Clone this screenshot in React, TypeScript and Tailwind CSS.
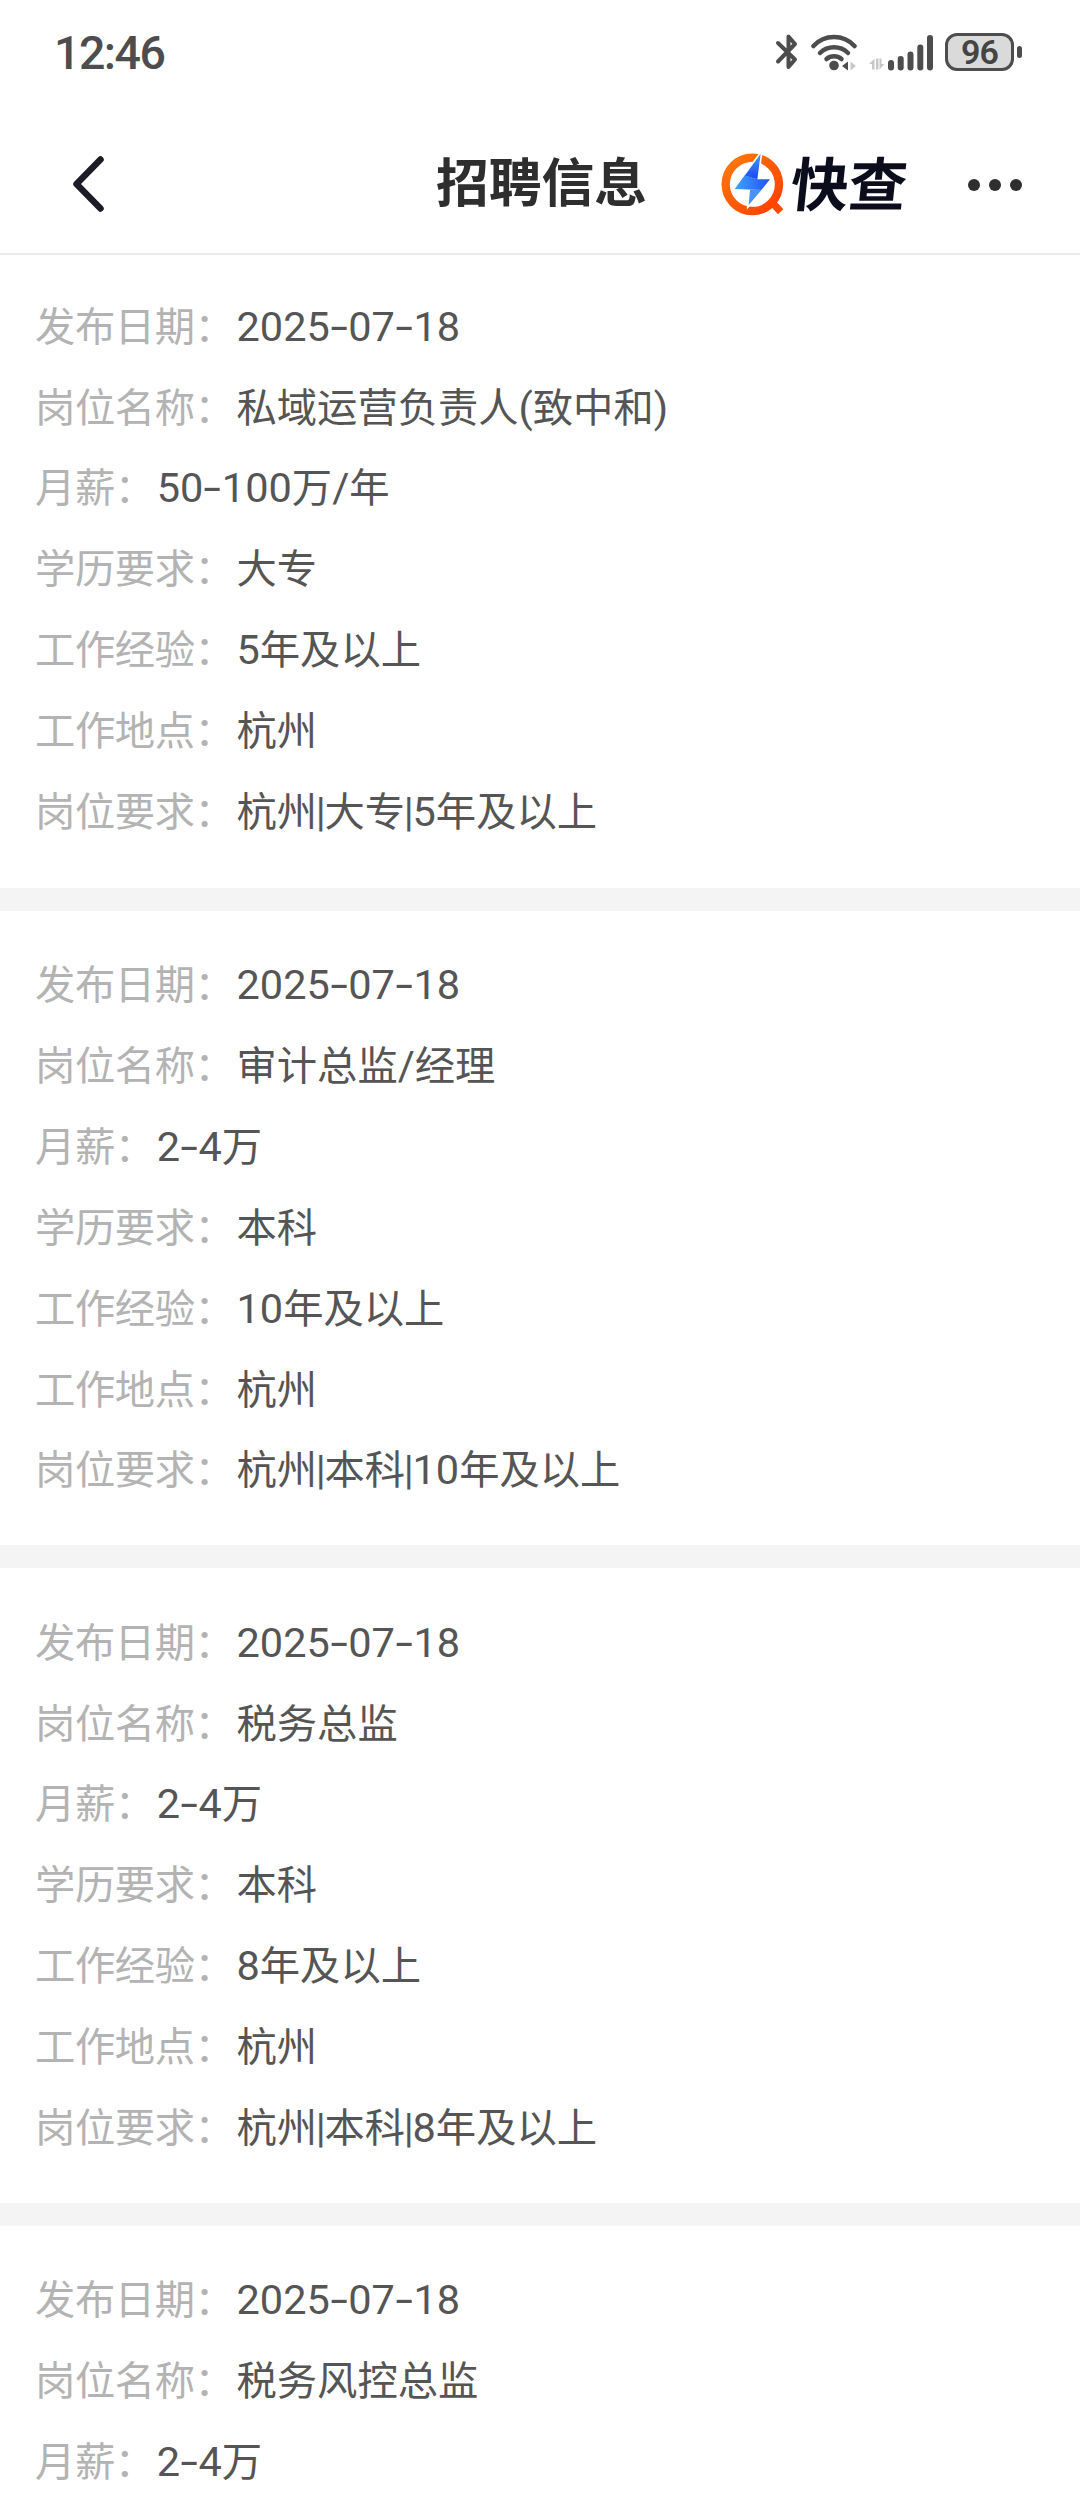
type Row = { label: string; value: string };

const jobs: Row[][] = [
  [
    { label: '发布日期', value: '2025-07-18' },
    { label: '岗位名称', value: '私域运营负责人(致中和)' },
    { label: '月薪', value: '50-100万/年' },
    { label: '学历要求', value: '大专' },
    { label: '工作经验', value: '5年及以上' },
    { label: '工作地点', value: '杭州' },
    { label: '岗位要求', value: '杭州|大专|5年及以上' }
  ],
  [
    { label: '发布日期', value: '2025-07-18' },
    { label: '岗位名称', value: '审计总监/经理' },
    { label: '月薪', value: '2-4万' },
    { label: '学历要求', value: '本科' },
    { label: '工作经验', value: '10年及以上' },
    { label: '工作地点', value: '杭州' },
    { label: '岗位要求', value: '杭州|本科|10年及以上' }
  ],
  [
    { label: '发布日期', value: '2025-07-18' },
    { label: '岗位名称', value: '税务总监' },
    { label: '月薪', value: '2-4万' },
    { label: '学历要求', value: '本科' },
    { label: '工作经验', value: '8年及以上' },
    { label: '工作地点', value: '杭州' },
    { label: '岗位要求', value: '杭州|本科|8年及以上' }
  ],
  [
    { label: '发布日期', value: '2025-07-18' },
    { label: '岗位名称', value: '税务风控总监' },
    { label: '月薪', value: '2-4万' }
  ]
];

function StatusBar() {
  return (
    <div className="h-[104px] shrink-0 flex items-center justify-between pl-[54px] pr-[58px] text-[#4d4d4d]">
      <span className="pt-0.5 font-['Roboto',sans-serif] text-[46.500px] leading-none font-medium tracking-[-1.500px]">12:46</span>
      <div className="flex items-center">
        <svg width="24" height="38" viewBox="0 0 24 38" fill="none" stroke="currentColor" strokeWidth="4" strokeLinecap="round" strokeLinejoin="round">
          <path d="M3 10 L20 26.500 L13.500 34 V3.500 L20 11 L3 28.500" />
        </svg>
        <svg width="46" height="38" viewBox="0 0 46 38" fill="none" stroke="currentColor" strokeWidth="4.500" strokeLinecap="round" className="ml-[12px]">
          <path d="M2.500 13 A28 28 0 0 1 43.500 13" />
          <path d="M9 20 A20 20 0 0 1 37 20" />
          <path d="M15.500 26 A11.500 11.500 0 0 1 30.500 26" />
          <circle cx="23" cy="32.500" r="4.800" fill="currentColor" stroke="none" />
          <path d="M31 33 L37 28.500 V37.500 Z" fill="currentColor" stroke="none" />
          <path d="M39.500 28.500 L45 33 L39.500 37.500 Z" fill="#c8c8c8" stroke="none" />
        </svg>
        <svg width="64" height="38" viewBox="0 0 64 38" fill="currentColor" className="ml-[12px]">
          <path d="M0 31 L5.500 25.500 V36.500 H3 V31 Z M7 25.500 H9.500 V36.500 H7 Z M10.500 25.500 H12.500 V31 H15.500 L10.500 36.500 Z" fill="#c8c8c8" />
          <rect x="19" y="27" width="6" height="10.500" rx="3" />
          <rect x="28.700" y="23" width="6" height="14.500" rx="3" />
          <rect x="38.500" y="18.500" width="6" height="19" rx="3" />
          <rect x="48.300" y="11.500" width="6" height="26" rx="3" />
          <rect x="58" y="2" width="6" height="35.500" rx="3" />
        </svg>
        <div className="ml-3 w-[69px] h-[38px] rounded-xl border-[3px] border-[#4d4d4d] bg-[#dadada] flex items-center justify-center font-['Roboto',sans-serif] text-[34px] leading-none font-semibold tracking-[-1px] text-[#444]">
          96
        </div>
        <div className="ml-[3px] w-[5px] h-3 rounded-sm bg-[#4d4d4d]" />
      </div>
    </div>
  );
}

function Logo() {
  return (
    <div className="flex items-center">
      <svg width="66" height="66" viewBox="60 62 198 198">
        <defs>
          <linearGradient id="ring" x1="0" y1="0" x2="1" y2="1">
            <stop offset="0" stopColor="#ff7a0a" />
            <stop offset="1" stopColor="#ff3d00" />
          </linearGradient>
          <linearGradient id="boltTop" x1="0" y1="0" x2="0" y2="1">
            <stop offset="0" stopColor="#3f9bfb" />
            <stop offset="1" stopColor="#1f45f5" />
          </linearGradient>
          <linearGradient id="boltMid" x1="0" y1="0" x2="1" y2="0">
            <stop offset="0" stopColor="#3fa4fb" />
            <stop offset="1" stopColor="#2350f5" />
          </linearGradient>
        </defs>
        <path d="M220 220 L242 244" stroke="#ff4a00" strokeWidth="22" />
        <circle cx="157" cy="162" r="80" fill="none" stroke="url(#ring)" strokeWidth="25" />
        <path d="M182 70 L104 176 L148 182 L146 224 L210 148 L172 146 Z" fill="none" stroke="#fff" strokeWidth="10" />
        <path d="M182 70 L134 136 L172 147 Z" fill="url(#boltTop)" />
        <path d="M134 135 L172 147 H210 L184 179 L104 176 Z" fill="url(#boltMid)" />
        <path d="M150 178 L185 178 L146 224 Z" fill="#4a92f8" />
      </svg>
      <span className="ml-[5px] pb-[5px] -skew-x-6 font-['Noto_Sans_CJK_SC',sans-serif] text-[58px] leading-[60px] font-bold text-[#0b0d1c]">快查</span>
    </div>
  );
}

function Header() {
  return (
    <div className="h-[151px] shrink-0 grid grid-cols-[1fr_auto_1fr] items-center border-b-2 border-[#ebebeb] pt-2.5">
      <svg width="32" height="56" viewBox="0 0 32 56" fill="none" stroke="#1c1b27" strokeWidth="6.500" strokeLinecap="round" strokeLinejoin="round" className="ml-[72px]">
        <path d="M28.500 3.500 L4.500 28 L28.500 52.500" />
      </svg>
      <h1 className="pb-2 pl-[3px] font-['Noto_Sans_CJK_SC',sans-serif] text-[52.800px] leading-none font-bold text-[#2e2e2e]">招聘信息</h1>
      <div className="flex items-center justify-between pl-[73px] pr-[58px]">
        <Logo />
        <div className="flex gap-[9px] pt-0.5">
          <i className="size-3 rounded-full bg-[#2e2e2e]" />
          <i className="size-3 rounded-full bg-[#2e2e2e]" />
          <i className="size-3 rounded-full bg-[#2e2e2e]" />
        </div>
      </div>
    </div>
  );
}

// Digits and signs are set slightly larger than the Chinese text, hyphens are drawn wide.
function Value({ text }: { text: string }) {
  const runs = text.match(/-|\||[\x20-\x2c\x2e-\x7b]+|[^\x20-\x7e]+/g) ?? [];
  return (
    <span className="text-[#555]">
      {runs.map((run, i) => {
        if (run === '-') {
          return <span key={i} className="inline-block w-[18.500px] text-center scale-x-150 font-['Roboto',sans-serif] text-[42px]">-</span>;
        }
        if (run === '|') {
          return <span key={i} className="-mx-[1.300px] font-['Roboto',sans-serif] text-[41px]">|</span>;
        }
        if (/^[\x20-\x7e]/.test(run)) {
          return <span key={i} className="font-['Roboto',sans-serif] text-[41.500px]">{run}</span>;
        }
        return <span key={i}>{run}</span>;
      })}
    </span>
  );
}

function JobCard({ rows }: { rows: Row[] }) {
  return (
    <div className="px-[35px] pt-[31.300px] pb-[37.300px] border-b-[23px] border-[#f4f4f4] first:pt-[28.700px] first:pb-[38.400px]">
      {rows.map((row) => (
        <div key={row.label} className="h-[80.850px] leading-[80.800px] whitespace-nowrap font-['Noto_Sans_CJK_SC',sans-serif] text-[40.300px]">
          <span className="text-[#b3b3b3] tracking-[-0.400px] mr-[2px]">{row.label}：</span>
          <Value text={row.value} />
        </div>
      ))}
    </div>
  );
}

export default function App() {
  return (
    <div className="w-[1080px] h-[2504px] overflow-hidden bg-white flex flex-col">
      <StatusBar />
      <Header />
      <div>
        {jobs.map((rows, i) => (
          <JobCard key={i} rows={rows} />
        ))}
      </div>
    </div>
  );
}
